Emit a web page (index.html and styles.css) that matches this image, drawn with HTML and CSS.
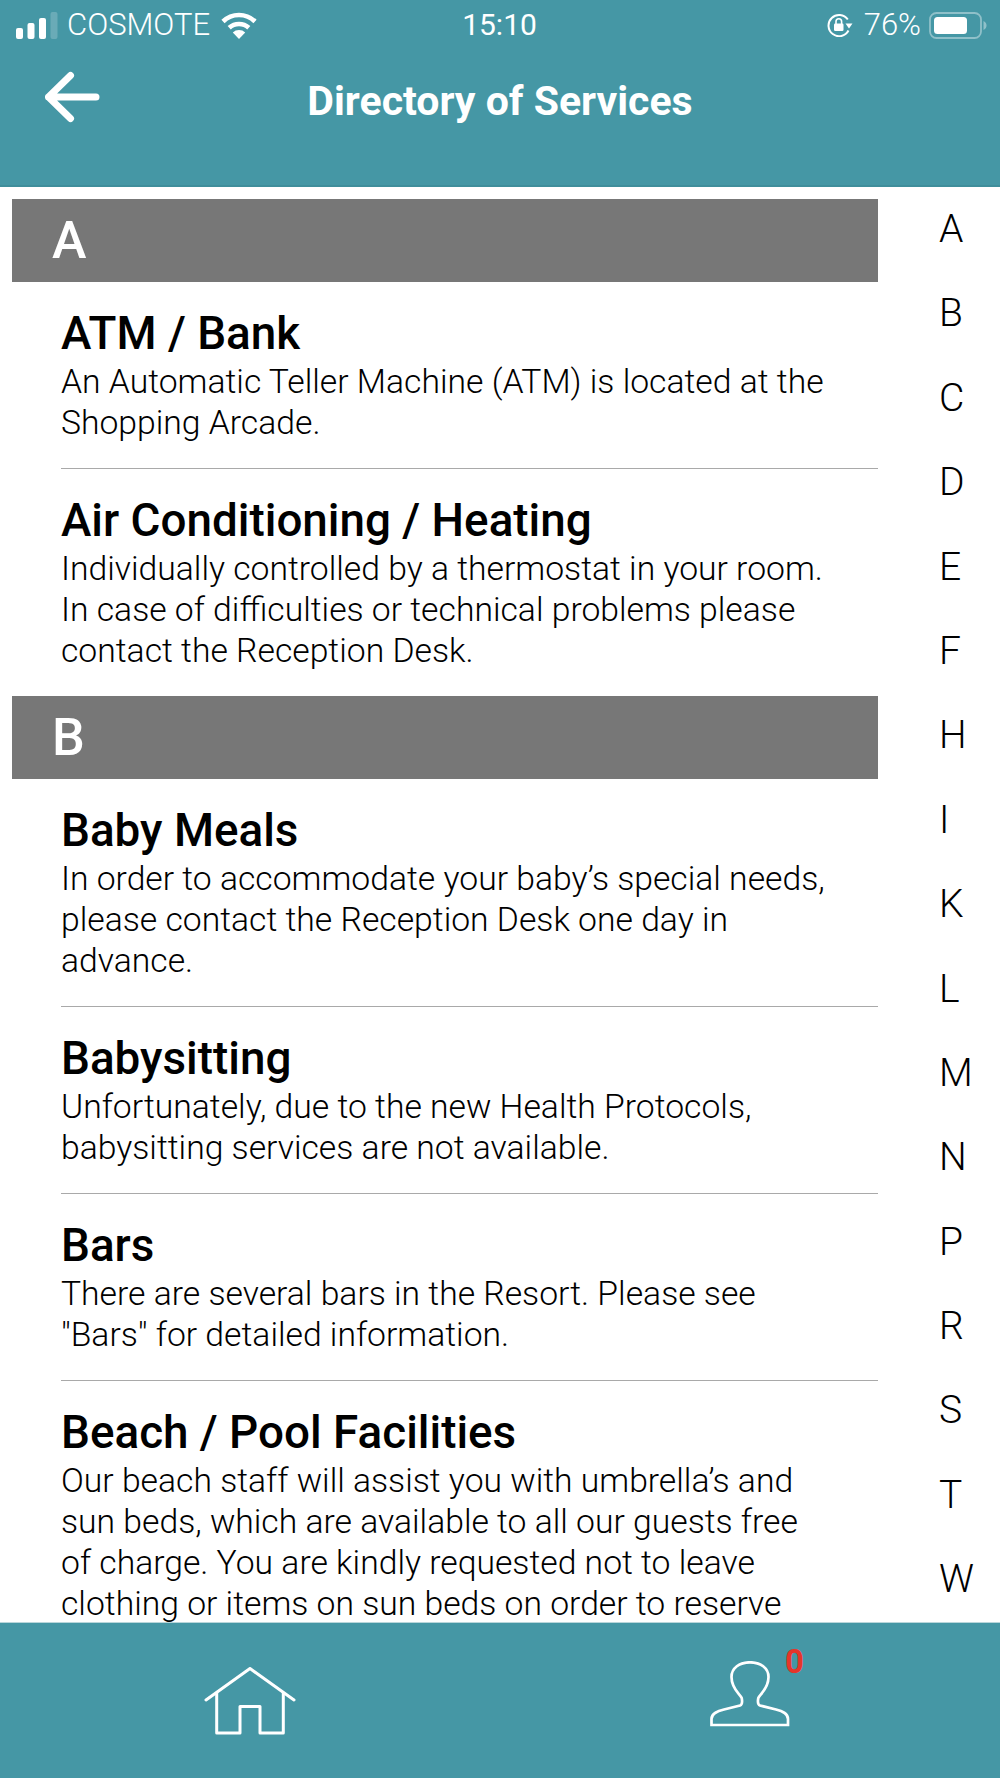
FILE: index.html
```html
<!DOCTYPE html>
<html lang="en">
<head>
  <meta charset="UTF-8">
  <title>Directory of Services</title>
  <link rel="stylesheet" href="styles.css">
</head>
<body>
  <div class="app">

    <header class="top">
      <!-- status bar -->
      <div class="status">
        <div class="status-left">
          <svg class="signal" width="42" height="27" viewBox="0 0 42 27">
            <rect x="0" y="16" width="7" height="11" rx="2" fill="#fff"/>
            <rect x="11.5" y="11" width="7" height="16" rx="2" fill="#fff"/>
            <rect x="23" y="6" width="7" height="21" rx="2" fill="#fff"/>
            <rect x="34.5" y="0" width="7" height="27" rx="2" fill="#fff" opacity="0.2"/>
          </svg>
          <span class="carrier">COSMOTE</span>
          <svg class="wifi" width="36" height="27" viewBox="0 0 36 27">
            <path d="M2 9.5 A23 23 0 0 1 34 9.5" fill="none" stroke="#fff" stroke-width="4.6"/>
            <path d="M8.2 15.8 A14.5 14.5 0 0 1 27.8 15.8" fill="none" stroke="#fff" stroke-width="4.6"/>
            <path d="M18 27 L11.8 20.4 A9 9 0 0 1 24.2 20.4 Z" fill="#fff"/>
          </svg>
        </div>
        <div class="status-time">15:10</div>
        <div class="status-right">
          <svg class="rotlock" width="27" height="24" viewBox="0 0 27 24">
            <path d="M22.5 17.5 A10.6 10.6 0 1 1 21.8 6.5" fill="none" stroke="#fff" stroke-width="2"/>
            <path d="M19.5 10.5 H26.5 L23 15.5 Z" fill="#fff"/>
            <rect x="8" y="10.5" width="9.5" height="7.5" rx="1.2" fill="#fff"/>
            <path d="M10 11 V8.6 A2.8 2.8 0 0 1 15.6 8.6 V11" fill="none" stroke="#fff" stroke-width="1.6"/>
          </svg>
          <span class="battery-pct">76%</span>
          <svg class="battery" width="58" height="27" viewBox="0 0 58 27">
            <rect x="1" y="1" width="51" height="25" rx="6.5" fill="none" stroke="#fff" stroke-opacity="0.4" stroke-width="1.8"/>
            <rect x="5" y="5" width="33" height="17" rx="3.5" fill="#fff"/>
            <path d="M54.5 9 C56.8 10 57.5 12 57.5 13.5 C57.5 15 56.8 17 54.5 18 Z" fill="#fff" opacity="0.4"/>
          </svg>
        </div>
      </div>
      <!-- title row -->
      <div class="nav">
        <svg class="back" width="56" height="52" viewBox="0 0 56 52">
          <path d="M25.500 4.500 L3.500 26 L25.500 47.500 M3.500 26 H51" fill="none" stroke="#fff" stroke-width="7" stroke-linecap="round" stroke-linejoin="round"/>
        </svg>
        <h1 class="title">Directory of Services</h1>
      </div>
    </header>

    <main class="content">
      <div class="list">
        <h2 class="section">A</h2>
        <div class="item">
          <h3>ATM / Bank</h3>
          <p>An Automatic Teller Machine (ATM) is located at the Shopping Arcade.</p>
        </div>
        <div class="item last">
          <h3>Air Conditioning / Heating</h3>
          <p>Individually controlled by a thermostat in your room. In case of difficulties or technical problems please contact the Reception Desk.</p>
        </div>

        <h2 class="section">B</h2>
        <div class="item">
          <h3>Baby Meals</h3>
          <p>In order to accommodate your baby’s special needs, please contact the Reception Desk one day in advance.</p>
        </div>
        <div class="item">
          <h3>Babysitting</h3>
          <p>Unfortunately, due to the new Health Protocols, babysitting services are not available.</p>
        </div>
        <div class="item">
          <h3>Bars</h3>
          <p>There are several bars in the Resort. Please see "Bars" for detailed information.</p>
        </div>
        <div class="item last">
          <h3>Beach / Pool Facilities</h3>
          <p>Our beach staff will assist you with umbrella’s and sun beds, which are available to all our guests free of charge. You are kindly requested not to leave clothing or items on sun beds on order to reserve</p>
        </div>
      </div>

      <nav class="letters">
        <a>A</a><a>B</a><a>C</a><a>D</a><a>E</a><a>F</a><a>H</a><a>I</a><a>K</a>
        <a>L</a><a>M</a><a>N</a><a>P</a><a>R</a><a>S</a><a>T</a><a>W</a>
      </nav>
    </main>

    <footer class="bottom">
      <div class="tab">
        <svg width="92" height="68" viewBox="0 0 92 68">
          <path d="M2 33 L46 1.500 L90 33" fill="none" stroke="#fff" stroke-width="3" stroke-linecap="round" stroke-linejoin="round"/>
          <path d="M12.700 25 V66 H36 V39.500 H56 V66 H79.300 V25" fill="none" stroke="#fff" stroke-width="3" stroke-linejoin="round"/>
        </svg>
      </div>
      <div class="tab">
        <div class="user">
          <svg width="80" height="66" viewBox="0 0 80 66">
            <path d="M1.500 64 V58 C1.500 52 8 50 14 48.500 L30 44.500 C32.500 43.500 32.500 41 31.700 37 C30 33 21.500 28 21.500 16 C21.500 7 29.500 1.300 40 1.300 C50.500 1.300 58.500 7 58.500 16 C58.500 28 50 33 48.300 37 C47.500 41 47.500 43.500 50 44.500 L66 48.500 C72 50 78 52 78 58 V64 Z" fill="none" stroke="#fff" stroke-width="2.700"/>
          </svg>
          <span class="badge">0</span>
        </div>
      </div>
    </footer>

  </div>
</body>
</html>
```

FILE: styles.css
```css
* { box-sizing: border-box; }
html, body { margin: 0; padding: 0; }
body { background-color: white; color: #000; font-family: Roboto, Arial, sans-serif; }

.app {
  display: flex;
  flex-direction: column;
  width: 1000px;
  height: 1778px;
  overflow: hidden;
}

/* header */
.top {
  height: 187px;
  flex-shrink: 0;
  background-color: #4597a5;
  border-bottom: 2px solid #3f8e9b;
  color: white;
}
.status {
  display: grid;
  grid-template-columns: 1fr auto 1fr;
  align-items: center;
  height: 48px;
  padding: 2px 13px 0 16px;
}
.status-left, .status-right { display: flex; align-items: center; }
.status-right { justify-content: flex-end; }
.carrier { margin-left: 9px; font-size: 31px; font-weight: 300; line-height: 46px; }
.wifi { margin-left: 11px; }
.status-time { margin-right: 4px; font-size: 30px; font-weight: 400; line-height: 46px; }
.battery-pct { margin: 0 8px 0 11px; font-size: 31px; font-weight: 300; line-height: 46px; }

.nav {
  display: grid;
  grid-template-columns: 1fr auto 1fr;
  align-items: center;
  height: 78px;
  margin-top: 10px;
  padding: 0 45px;
}
.title { margin: 0; padding-top: 8px; font-size: 41px; font-weight: 700; line-height: 48px; color: white; }

/* list */
.content { display: flex; flex: 1; min-height: 0; overflow: hidden; }
.list { width: 878px; padding: 12px 0 0 12px; flex-shrink: 0; }
.section {
  height: 83px;
  margin: 0;
  padding-left: 40px;
  background-color: #777777;
  color: white;
  font-size: 52px;
  font-weight: 500;
  line-height: 83px;
}
.item {
  margin-left: 49px;
  padding: 25px 0 25px;
  border-bottom: 1px solid #a9a9a9;
}
.item.last { border-bottom: none; }
.item h3 { margin: 0; font-size: 45.8px; font-weight: 500; line-height: 54px; }
.item p { margin: 0; max-width: 770px; font-size: 33.7px; font-weight: 300; line-height: 41px; }

/* letter index */
.letters { display: flex; flex-direction: column; padding-left: 61px; }
.letters a { display: block; height: 84.4px; font-size: 39px; font-weight: 300; line-height: 84.4px; }

/* bottom tabs */
.bottom {
  display: grid;
  grid-template-columns: 1fr 1fr;
  height: 156px;
  flex-shrink: 0;
  background-color: #4597a5;
  border-top: 1px solid #b9d6db;
}
.tab { display: flex; align-items: center; justify-content: center; }
.user { position: relative; display: flex; margin-top: -14px; }
.badge {
  position: absolute;
  top: -14px;
  right: -14px;
  color: #e5352a;
  font-size: 33px;
  font-weight: 700;
  line-height: 30px;
}
```
